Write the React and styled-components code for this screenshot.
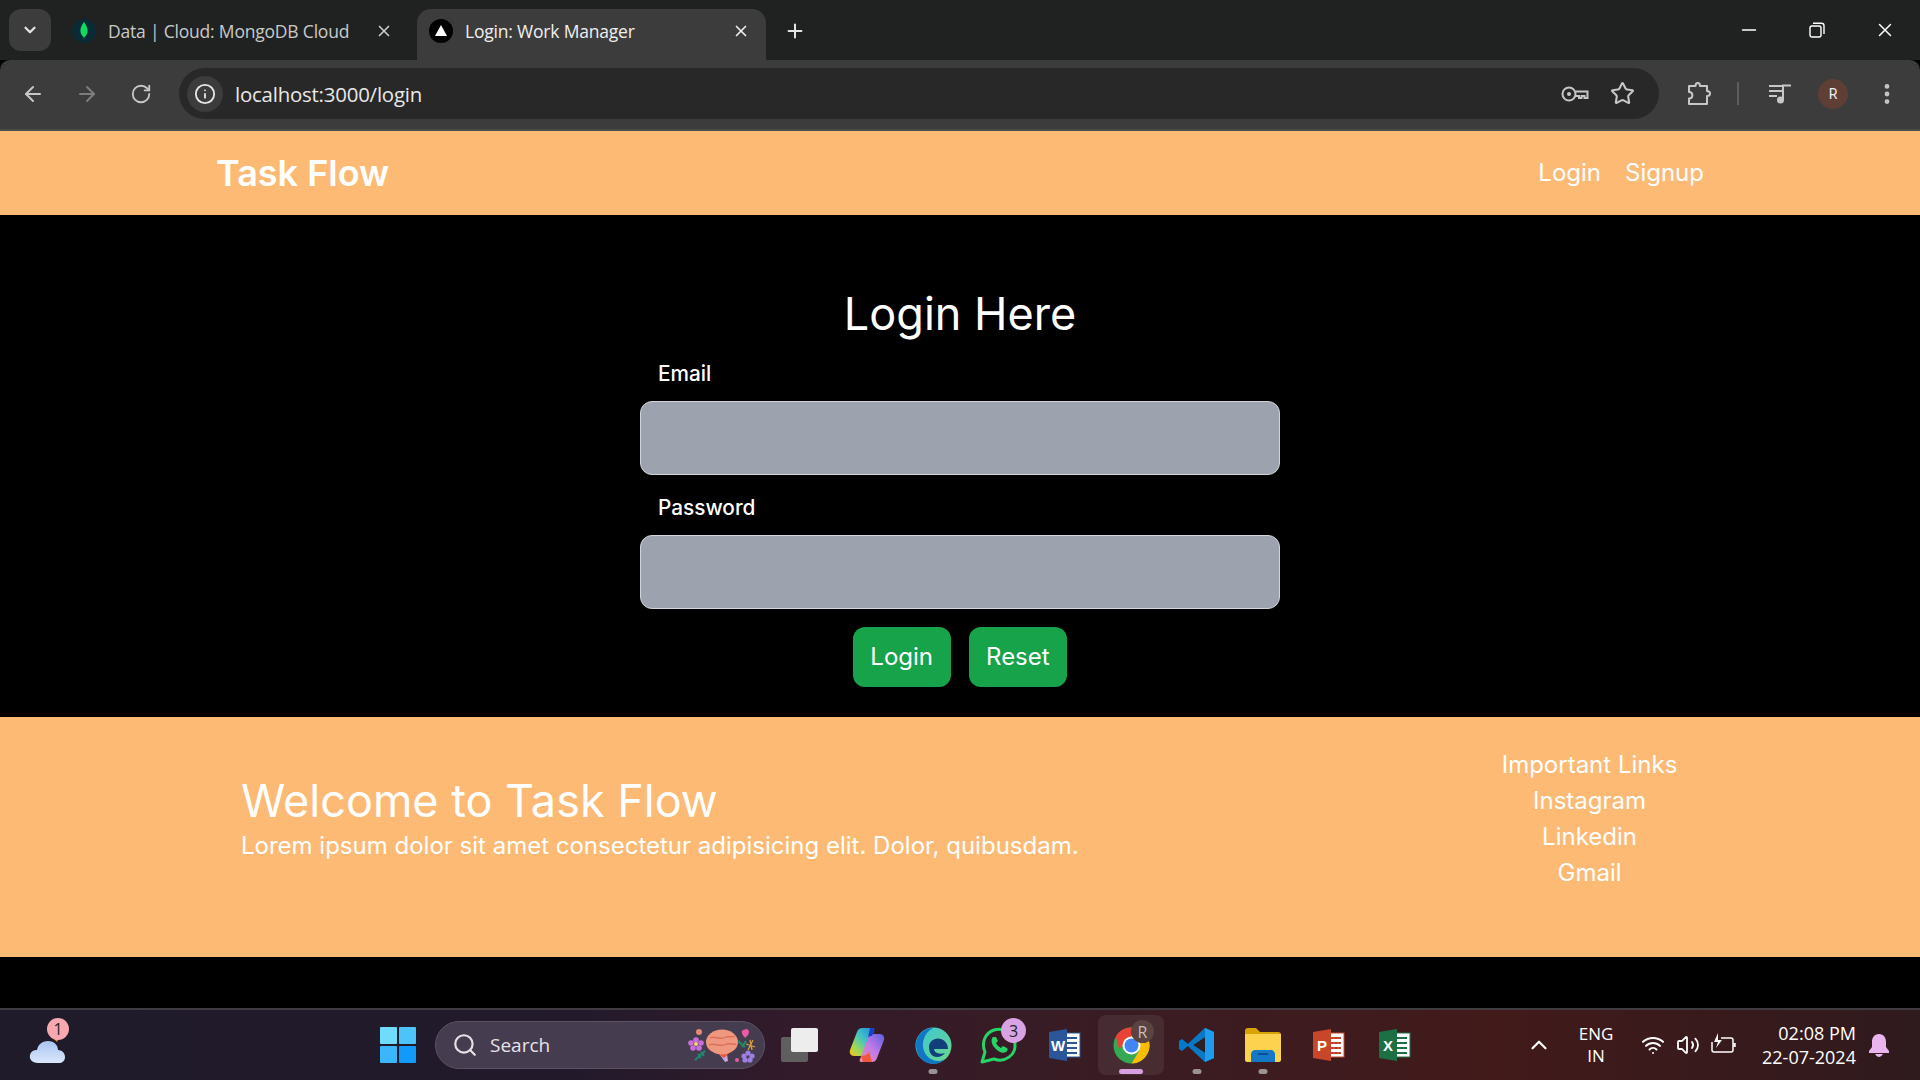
import React from "react";
import styled, { createGlobalStyle } from "styled-components";
import {
  ArrowLeft,
  ArrowRight,
  RotateCw,
  Info,
  Star,
  X,
  Plus,
  ChevronDown,
  ChevronUp,
  Minus,
  Search,
  Wifi,
  Volume2,
  EllipsisVertical,
} from "lucide-react";

const GlobalStyle = createGlobalStyle`
  html, body {
    margin: 0;
    padding: 0;
    background: #000;
  }
  * {
    box-sizing: border-box;
  }
`;

const Shell = styled.div`
  width: 1920px;
  height: 1080px;
  overflow: hidden;
  display: flex;
  flex-direction: column;
  background: #000;
  font-family: Inter, "Liberation Sans", sans-serif;
`;

/* ---- browser chrome ---- */

const TabStrip = styled.div`
  height: 60px;
  flex-shrink: 0;
  background: #202221;
  display: flex;
  align-items: flex-end;
  padding-left: 9px;
`;

const TabMenu = styled.div`
  width: 42px;
  height: 42px;
  margin-bottom: 9px;
  border-radius: 12px;
  background: #3c3c3c;
  color: #e4e4e4;
  display: flex;
  align-items: center;
  justify-content: center;
`;

const Tab = styled.div`
  width: ${(p) => (p.$active ? "349px" : "356px")};
  height: 51px;
  margin-left: ${(p) => (p.$active ? "1px" : "9px")};
  padding: 0 ${(p) => (p.$active ? "16px" : "23px")} 7px 12px;
  border-radius: 14px 14px 0 0;
  background: ${(p) => (p.$active ? "#3c3c3c" : "transparent")};
  color: ${(p) => (p.$active ? "#efefef" : "#c9caca")};
  display: flex;
  align-items: center;
  font-family: "Open Sans", "Liberation Sans", sans-serif;
  font-size: 17.5px;
  letter-spacing: -0.2px;
`;

const TabTitle = styled.span`
  flex: 1;
  margin-left: 12px;
  white-space: nowrap;
`;

const NewTab = styled.div`
  margin: 0 0 18px 18px;
  color: #e4e4e4;
  display: flex;
`;

const WindowControls = styled.div`
  margin-left: auto;
  height: 60px;
  display: flex;
  align-items: center;
  padding: 0 24px 0 0;
  gap: 49px;
  color: #fff;
`;

const Toolbar = styled.div`
  height: 71px;
  flex-shrink: 0;
  background: #3c3c3c;
  border-bottom: 2px solid #4a4a4a;
  border-radius: 10px 10px 0 0;
  display: flex;
  align-items: center;
  padding: 0 0 2px 21px;
  color: #c7c7c7;
`;

const NavButton = styled.div`
  width: 24px;
  margin-right: 30px;
  display: flex;
  justify-content: center;
  color: ${(p) => (p.$dim ? "#7d7d7d" : "#c7c7c7")};
`;

const UrlBar = styled.div`
  width: 1480px;
  height: 51px;
  margin-left: -4px;
  padding: 0 24px 0 8px;
  border-radius: 26px;
  background: #282828;
  display: flex;
  align-items: center;
`;

const InfoBadge = styled.div`
  width: 36px;
  height: 36px;
  border-radius: 50%;
  background: #3c3c3c;
  color: #e6e6e6;
  display: flex;
  align-items: center;
  justify-content: center;
`;

const UrlText = styled.span`
  flex: 1;
  margin-left: 12px;
  color: #e8e8e8;
  font-family: "Open Sans", "Liberation Sans", sans-serif;
  font-size: 20.4px;
  letter-spacing: -0.2px;
`;

const UrlActions = styled.div`
  display: flex;
  align-items: center;
  gap: 21px;
`;

const ToolbarActions = styled.div`
  display: flex;
  align-items: center;
  margin-left: 28px;
`;

const Separator = styled.div`
  width: 2px;
  height: 23px;
  margin: 0 29px 0 26px;
  background: #5e5e5e;
`;

const Avatar = styled.div`
  width: 30px;
  height: 30px;
  margin: 0 26px 0 26px;
  border-radius: 50%;
  background: #5f3e36;
  color: #eee;
  font-family: Roboto, sans-serif;
  font-size: 14px;
  display: flex;
  align-items: center;
  justify-content: center;
`;

/* ---- page ---- */

const NavBar = styled.nav`
  height: 84px;
  flex-shrink: 0;
  background: #fdba74;
  color: #fff;
  display: flex;
  align-items: center;
  justify-content: space-between;
  padding: 0 216px;
`;

const Brand = styled.div`
  font-size: 36px;
  font-weight: 600;
`;

const NavLinks = styled.div`
  display: flex;
  gap: 24px;
  padding-bottom: 2px;
  font-size: 24px;
`;

const Main = styled.main`
  height: 502px;
  flex-shrink: 0;
  background: #000;
  display: flex;
  flex-direction: column;
  align-items: center;
  padding-top: 71px;
  color: #fff;
`;

const Title = styled.h1`
  margin: 0;
  font-size: 45px;
  line-height: 55px;
  font-weight: 400;
`;

const Field = styled.div`
  width: 640px;
  margin-top: 17px;
  display: flex;
  flex-direction: column;
`;

const Label = styled.label`
  height: 30px;
  margin-bottom: 13px;
  padding-left: 18px;
  font-size: 20.8px;
  line-height: 32px;
  font-weight: 500;
`;

const Input = styled.input`
  height: 74px;
  border: 1px solid #d1d5db;
  border-radius: 12px;
  background: #9ca3af;
  outline: none;
`;

const Buttons = styled.div`
  margin-top: 18px;
  display: flex;
  gap: 18px;
`;

const Button = styled.button`
  height: 60px;
  padding: 0 17.5px 2px;
  border: none;
  border-radius: 12px;
  background: #16a34a;
  color: #fff;
  font-family: inherit;
  font-size: 24px;
`;

const Footer = styled.footer`
  height: 240px;
  flex-shrink: 0;
  background: #fdba74;
  color: #fff;
  display: flex;
`;

const FooterIntro = styled.div`
  flex: 1;
  padding: 56px 0 0 241px;
`;

const FooterTitle = styled.h2`
  margin: 0;
  font-size: 45px;
  line-height: 56px;
  font-weight: 400;
`;

const FooterText = styled.p`
  margin: 1px 0 0;
  font-size: 24px;
  line-height: 32px;
`;

const FooterLinks = styled.div`
  width: 661px;
  padding-top: 30px;
  text-align: center;
  font-size: 24px;
  line-height: 36px;
`;

const Spacer = styled.div`
  flex: 1;
  background: #000;
`;

/* ---- taskbar ---- */

const Taskbar = styled.div`
  height: 72px;
  flex-shrink: 0;
  border-top: 2px solid #3f3b40;
  background: linear-gradient(90deg, #1f1b2a 0%, #221a2b 30%, #331b2a 42%, #3a1c22 60%, #421a1a 78%, #2f1a1e 100%);
  display: flex;
  align-items: center;
  color: #fff;
`;

const Weather = styled.div`
  width: 380px;
  padding-left: 29px;
  position: relative;
  display: flex;
`;

const CountBadge = styled.div`
  position: absolute;
  top: ${(p) => p.$top}px;
  left: ${(p) => p.$left}px;
  width: ${(p) => p.$size}px;
  height: ${(p) => p.$size}px;
  border-radius: 50%;
  background: ${(p) => p.$color};
  color: ${(p) => p.$ink || "#222"};
  font-family: "Open Sans", sans-serif;
  font-size: 16px;
  display: flex;
  align-items: center;
  justify-content: center;
`;

const StartIcon = styled.div`
  width: 36px;
  height: 36px;
  display: grid;
  grid-template-columns: 1fr 1fr;
  gap: 2px;
`;

const StartPane = styled.div`
  background: ${(p) => p.$bg};
  border-radius: 1px;
`;

const SearchBox = styled.div`
  width: 330px;
  height: 48px;
  margin-left: 19px;
  padding: 0 8px 0 16px;
  border-radius: 24px;
  border: 1px solid #5c5264;
  background: #463c50;
  color: #e6e3e8;
  display: flex;
  align-items: center;
  font-family: "Open Sans", sans-serif;
  font-size: 19px;
`;

const SearchLabel = styled.span`
  flex: 1;
  margin-left: 12px;
`;

const Apps = styled.div`
  margin-left: 3px;
  display: flex;
  align-items: center;
`;

const AppSlot = styled.div`
  width: 66px;
  height: 60px;
  position: relative;
  display: flex;
  align-items: center;
  justify-content: center;
  border-radius: 8px;
  background: ${(p) => (p.$active ? "rgba(255,255,255,0.07)" : "transparent")};
`;

const RunDot = styled.div`
  position: absolute;
  bottom: 1px;
  left: 50%;
  transform: translateX(-50%);
  width: ${(p) => (p.$active ? "24px" : "9px")};
  height: 5px;
  border-radius: 3px;
  background: ${(p) => (p.$active ? "#d9a0e0" : "#9a9295")};
`;

const Tray = styled.div`
  margin-left: 98px;
  display: flex;
  align-items: center;
  color: #fff;
  font-family: "Open Sans", sans-serif;
`;

const Lang = styled.div`
  width: 60px;
  margin: 0 15px 0 14px;
  text-align: center;
  font-size: 17px;
  line-height: 22px;
`;

const TrayIcons = styled.div`
  display: flex;
  align-items: center;
  gap: 11px;
`;

const Clock = styled.div`
  margin: 0 12px 0 25px;
  text-align: right;
  font-size: 18px;
  line-height: 24px;
`;

/* ---- drawn icons ---- */

const KeyIcon = () => (
  <svg width="28" height="18" viewBox="0 0 28 18" fill="none" stroke="currentColor" strokeWidth="2">
    <circle cx="8" cy="9" r="6.5" />
    <circle cx="8" cy="9" r="2" fill="currentColor" stroke="none" />
    <path d="M14.5 6.5H26.5V13H23.5V11H20.5V13H18V11H14.5" />
  </svg>
);

const PuzzleIcon = () => (
  <svg width="24" height="26" viewBox="0 0 24 26" fill="none" stroke="currentColor" strokeWidth="2" strokeLinejoin="round">
    <path d="M2 5H8.5C8.5 1 13 1 13 5H20V10C24 10 24 15 20 15V23H2V17.5C6.5 17.5 6.5 11 2 11Z" />
  </svg>
);

const MediaIcon = () => (
  <svg width="24" height="22" viewBox="0 0 24 22" fill="none" stroke="currentColor" strokeWidth="2">
    <path d="M1 3H14M1 8H14M1 13H9" />
    <path d="M15 17V2.5H23" />
    <circle cx="12.5" cy="17" r="3.5" fill="currentColor" stroke="none" />
  </svg>
);

const RestoreIcon = () => (
  <svg width="16" height="16" viewBox="0 0 16 16" fill="none" stroke="currentColor" strokeWidth="1.4">
    <rect x="1" y="4" width="11" height="11" rx="2" />
    <path d="M4 1.2H12.5C14 1.2 15 2.2 15 3.7V12" />
  </svg>
);

const MongoLeaf = () => (
  <svg width="24" height="24" viewBox="0 0 24 24">
    <circle cx="12" cy="12" r="12" fill="#0b2a35" />
    <path d="M12 3C15 7 16 10 15.5 13C15 16 13 17.5 12.4 18L12 21L11.6 18C11 17.5 9 16 8.5 13C8 10 9 7 12 3Z" fill="#13d960" />
  </svg>
);

const NextTriangle = () => (
  <svg width="24" height="24" viewBox="0 0 24 24">
    <circle cx="12" cy="12" r="12" fill="#000" />
    <path d="M12 6L18 17H6Z" fill="#fff" />
  </svg>
);

const CloudIcon = () => (
  <svg width="38" height="38" viewBox="0 0 38 38">
    <defs>
      <linearGradient id="cloud" x1="0" y1="0" x2="0" y2="1">
        <stop offset="0" stopColor="#a9c4f2" />
        <stop offset="1" stopColor="#dbe7fb" />
      </linearGradient>
    </defs>
    <path d="M26 8L30 12L28 16L24 12Z" fill="#f08a2c" />
    <path d="M9 37C3 37 0 33 1 29C2 25 5 24 8 24C9 18 14 15 19 15C25 15 29 19 29 24C33 24 36 27 36 31C36 35 33 37 30 37Z" fill="url(#cloud)" />
  </svg>
);

const BrainIcon = () => (
  <svg width="70" height="36" viewBox="0 0 70 36">
    <path d="M34 28L39 35L42 34L41 27Z" fill="#c5a6de" />
    <path d="M30 25H44L38 31Z" fill="#f0562d" />
    <ellipse cx="36" cy="15" rx="16" ry="12.5" fill="#f0977f" />
    <path d="M24 11C29 8 34 14 40 10C43 9 46 11 49 9M23 18C29 15 34 21 41 17C44 16 47 18 50 17" stroke="#d9705c" strokeWidth="1.4" fill="none" />
    <g fill="#c96fdb">
      <circle cx="10" cy="13" r="2.8" />
      <circle cx="15" cy="16" r="2.8" />
      <circle cx="13" cy="21" r="2.8" />
      <circle cx="7" cy="21" r="2.8" />
      <circle cx="5" cy="16" r="2.8" />
    </g>
    <circle cx="10" cy="17" r="2" fill="#f5d96b" />
    <circle cx="13" cy="5" r="3" fill="#e58a72" />
    <path d="M9 33L19 24M12 27L15 31M15 25L18 29" stroke="#1f8a70" strokeWidth="2" />
    <path d="M58 3C60 1 63 2 63 5C63 8 60 10 59 11C58 9 55 7 56 4C56 3 57 3 58 3Z" fill="#e85ca5" />
    <path d="M52 14L59 20M56 20L60 14" stroke="#1f8a70" strokeWidth="2" />
    <path d="M67 13L62 23M60 17L69 20M64 13L66 23" stroke="#d9a03c" strokeWidth="1.3" />
    <g fill="#9c7fe0">
      <circle cx="62" cy="26" r="2.6" />
      <circle cx="66" cy="29" r="2.6" />
      <circle cx="64" cy="33" r="2.6" />
      <circle cx="59" cy="33" r="2.6" />
      <circle cx="58" cy="29" r="2.6" />
    </g>
    <circle cx="51" cy="33" r="2" fill="#e85ca5" />
  </svg>
);

const TaskViewIcon = () => (
  <svg width="40" height="38" viewBox="0 0 40 38">
    <rect x="0" y="11" width="27" height="25" rx="2" fill="#5f5f5f" />
    <rect x="10" y="2" width="27" height="24" rx="2" fill="#ededed" />
  </svg>
);

const CopilotIcon = () => (
  <svg width="36" height="36" viewBox="0 0 36 36">
    <defs>
      <linearGradient id="cop1" x1="1" y1="0" x2="0" y2="1">
        <stop offset="0" stopColor="#1f86e6" />
        <stop offset="0.45" stopColor="#46c7c0" />
        <stop offset="0.75" stopColor="#a6d84e" />
        <stop offset="1" stopColor="#f7c21f" />
      </linearGradient>
      <linearGradient id="cop2" x1="1" y1="0" x2="0" y2="1">
        <stop offset="0" stopColor="#5a5fe0" />
        <stop offset="0.5" stopColor="#c27ae6" />
        <stop offset="1" stopColor="#f28aa8" />
      </linearGradient>
    </defs>
    <path d="M13 1H24C25 1 26 2 25 4L17 25C16 28 14 29 11 29H5C2 29 0 26 1 23L8 5C9 2 11 1 13 1Z" fill="url(#cop1)" />
    <path d="M23 35H12C11 35 10 34 11 32L19 11C20 8 22 7 25 7H31C34 7 36 10 35 13L28 31C27 34 25 35 23 35Z" fill="url(#cop2)" />
    <path d="M12 29L14 35H23L20 25C18 28 15 29 12 29Z" fill="#f0583c" />
    <path d="M21 1H24C25 1 26 2 25 4L23 9C21 9 20 9 19 11Z" fill="#1a3fc4" />
  </svg>
);

const EdgeIcon = () => (
  <svg width="37" height="37" viewBox="0 0 37 37">
    <defs>
      <linearGradient id="edge1" x1="0" y1="0" x2="1" y2="1">
        <stop offset="0" stopColor="#38c6d8" />
        <stop offset="1" stopColor="#6fd68a" />
      </linearGradient>
    </defs>
    <circle cx="18.5" cy="18.5" r="18" fill="url(#edge1)" />
    <path d="M1 18C1 8 9 1 18 1C9 6 6 16 9 24C12 32 22 37 30 32C26 36 22 37 18 37C8 37 1 28 1 18Z" fill="#1177c4" />
    <path d="M14 20C14 14 20 10 26 12C31 14 33 18 33 22H19C19 25 23 28 30 26C27 30 22 31 18 29C15 27 14 24 14 20Z" fill="#123f7a" />
  </svg>
);

const WhatsAppIcon = () => (
  <svg width="38" height="38" viewBox="0 0 38 38" fill="none">
    <path d="M2 36L5 26C1 17 5 7 14 4C24 1 34 8 35 18C36 29 25 37 14 33Z" stroke="#25d366" strokeWidth="3" strokeLinejoin="round" />
    <path d="M13 11C11 13 11 17 14 21C18 26 23 28 26 26C28 25 28 23 27 22L23 20L21 22C19 21 17 19 16 17L18 15L16 11Z" fill="#25d366" />
  </svg>
);

const ChromeIcon = () => (
  <svg width="37" height="37" viewBox="0 0 37 37">
    <circle cx="18.5" cy="18.5" r="18" fill="#34a853" />
    <path d="M18.5 0.5A18 18 0 0 1 34.1 9.5L18.5 9.5L6 22L2.9 9.5A18 18 0 0 1 18.5 0.5Z" fill="#ea4335" />
    <path d="M34.1 9.5A18 18 0 0 1 18.5 36.5L26 24L18.5 9.5Z" fill="#fbbc04" />
    <circle cx="18.5" cy="18.5" r="9" fill="#fff" />
    <circle cx="18.5" cy="18.5" r="7" fill="#4285f4" />
  </svg>
);

const VsCodeIcon = () => (
  <svg width="36" height="36" viewBox="0 0 36 36">
    <path d="M26 1L35 5V31L26 35L9 19L3 24L0 22V14L3 12L9 17Z" fill="#007acc" />
    <path d="M26 1L35 5V31L26 35Z" fill="#1f9cf0" />
    <path d="M26 10V26L14 18Z" fill="#2d2024" />
    <path d="M9 17L26 1V10L14 18L26 26V35L9 19Z" fill="#0a78c4" />
  </svg>
);

const FilesIcon = () => (
  <svg width="36" height="34" viewBox="0 0 36 34">
    <path d="M0 3C0 1 1 0 3 0H11L15 4H33C35 4 36 5 36 7V12H0Z" fill="#d9a400" />
    <path d="M0 6H36V32C36 33 35 34 34 34H2C1 34 0 33 0 32Z" fill="#fcd24f" />
    <path d="M6 34V26C6 24 8 22 10 22H26C28 22 30 24 30 26V34Z" fill="#1478c8" />
    <path d="M13 26H23" stroke="#0a4f8f" strokeWidth="2" />
  </svg>
);

const OfficeIcon = ({ color, letter }) => (
  <svg width="32" height="32" viewBox="0 0 32 32">
    <rect x="13" y="4" width="18" height="24" fill="#fff" stroke={color} />
    <path d="M17 9H28M17 14H28M17 19H28M17 24H28" stroke={color} strokeWidth="1.8" />
    <path d="M0 3L18 0V32L0 29Z" fill={color} />
    <text x="9" y="22" textAnchor="middle" fontFamily="Liberation Sans" fontWeight="700" fontSize="15" fill="#fff">{letter}</text>
  </svg>
);

const BatteryIcon = () => (
  <svg width="26" height="24" viewBox="0 0 26 24" fill="none" stroke="currentColor" strokeWidth="1.5">
    <path d="M10 5H20C21.5 5 22 6 22 7V17C22 18 21.5 19 20 19H3C1.5 19 1 18 1 17V9" />
    <path d="M23.5 10V14" strokeWidth="2.5" />
    <path d="M7 0L3 9H7L5 15L11 7H7Z" fill="currentColor" stroke="none" />
  </svg>
);

const BellIcon = () => (
  <svg width="22" height="24" viewBox="0 0 22 24" fill="#eab4ee">
    <path d="M11 1C6 1 4 5 4 9V14L1 18V20H21V18L18 14V9C18 5 16 1 11 1Z" />
    <path d="M7 21H15C14 23 12 24 11 24C10 24 8 23 7 21Z" />
  </svg>
);

const apps = [
  { id: "task", icon: <TaskViewIcon /> },
  { id: "copilot", icon: <CopilotIcon /> },
  { id: "edge", icon: <EdgeIcon />, running: true },
  { id: "whatsapp", icon: <WhatsAppIcon />, badge: { text: "3", top: 3, left: 35, size: 25, color: "#d9a3e3" } },
  { id: "word", icon: <OfficeIcon color="#2b579a" letter="W" /> },
  { id: "chrome", icon: <ChromeIcon />, active: true, badge: { text: "R", top: 5, left: 33, size: 23, color: "#5a4340", ink: "#c9bdb8" } },
  { id: "vscode", icon: <VsCodeIcon />, running: true },
  { id: "files", icon: <FilesIcon />, running: true },
  { id: "ppt", icon: <OfficeIcon color="#c8472a" letter="P" /> },
  { id: "excel", icon: <OfficeIcon color="#1d7044" letter="X" /> },
];

const App = () => {
  return (
    <Shell>
      <GlobalStyle />
      <TabStrip>
        <TabMenu>
          <ChevronDown size={18} strokeWidth={3} />
        </TabMenu>
        <Tab>
          <MongoLeaf />
          <TabTitle>Data | Cloud: MongoDB Cloud</TabTitle>
          <X size={18} strokeWidth={2.2} />
        </Tab>
        <Tab $active>
          <NextTriangle />
          <TabTitle>Login: Work Manager</TabTitle>
          <X size={18} strokeWidth={2.2} />
        </Tab>
        <NewTab>
          <Plus size={22} strokeWidth={2.2} />
        </NewTab>
        <WindowControls>
          <Minus size={22} strokeWidth={1.8} />
          <RestoreIcon />
          <X size={22} strokeWidth={1.6} />
        </WindowControls>
      </TabStrip>

      <Toolbar>
        <NavButton>
          <ArrowLeft size={24} strokeWidth={2} />
        </NavButton>
        <NavButton $dim>
          <ArrowRight size={24} strokeWidth={2} />
        </NavButton>
        <NavButton>
          <RotateCw size={22} strokeWidth={2} />
        </NavButton>
        <UrlBar>
          <InfoBadge>
            <Info size={22} strokeWidth={2} />
          </InfoBadge>
          <UrlText>localhost:3000/login</UrlText>
          <UrlActions>
            <KeyIcon />
            <Star size={25} strokeWidth={2} />
          </UrlActions>
        </UrlBar>
        <ToolbarActions>
          <PuzzleIcon />
          <Separator />
          <MediaIcon />
          <Avatar>R</Avatar>
          <EllipsisVertical size={26} strokeWidth={2.4} />
        </ToolbarActions>
      </Toolbar>

      <NavBar>
        <Brand>Task Flow</Brand>
        <NavLinks>
          <span>Login</span>
          <span>Signup</span>
        </NavLinks>
      </NavBar>

      <Main>
        <Title>Login Here</Title>
        <Field>
          <Label>Email</Label>
          <Input type="email" />
        </Field>
        <Field>
          <Label>Password</Label>
          <Input type="password" />
        </Field>
        <Buttons>
          <Button>Login</Button>
          <Button>Reset</Button>
        </Buttons>
      </Main>

      <Footer>
        <FooterIntro>
          <FooterTitle>Welcome to Task Flow</FooterTitle>
          <FooterText>Lorem ipsum dolor sit amet consectetur adipisicing elit. Dolor, quibusdam.</FooterText>
        </FooterIntro>
        <FooterLinks>
          <div>Important Links</div>
          <div>Instagram</div>
          <div>Linkedin</div>
          <div>Gmail</div>
        </FooterLinks>
      </Footer>

      <Spacer />

      <Taskbar>
        <Weather>
          <CloudIcon />
          <CountBadge $top={-8} $left={47} $size={22} $color="#f9a8b0">1</CountBadge>
        </Weather>
        <StartIcon>
          <StartPane $bg="#6fdcfb" />
          <StartPane $bg="#4cc4fa" />
          <StartPane $bg="#3cb6fb" />
          <StartPane $bg="#119afa" />
        </StartIcon>
        <SearchBox>
          <Search size={26} strokeWidth={2} />
          <SearchLabel>Search</SearchLabel>
          <BrainIcon />
        </SearchBox>
        <Apps>
          {apps.map((app) => (
            <AppSlot key={app.id} $active={app.active}>
              {app.icon}
              {app.badge && (
                <CountBadge
                  $top={app.badge.top}
                  $left={app.badge.left}
                  $size={app.badge.size}
                  $color={app.badge.color}
                  $ink={app.badge.ink}
                >
                  {app.badge.text}
                </CountBadge>
              )}
              {(app.running || app.active) && <RunDot $active={app.active} />}
            </AppSlot>
          ))}
        </Apps>
        <Tray>
          <ChevronUp size={26} strokeWidth={2} />
          <Lang>
            ENG
            <br />
            IN
          </Lang>
          <TrayIcons>
            <Wifi size={24} strokeWidth={2} />
            <Volume2 size={24} strokeWidth={1.8} />
            <BatteryIcon />
          </TrayIcons>
          <Clock>
            02:08 PM
            <br />
            22-07-2024
          </Clock>
          <BellIcon />
        </Tray>
      </Taskbar>
    </Shell>
  );
};

export default App;
